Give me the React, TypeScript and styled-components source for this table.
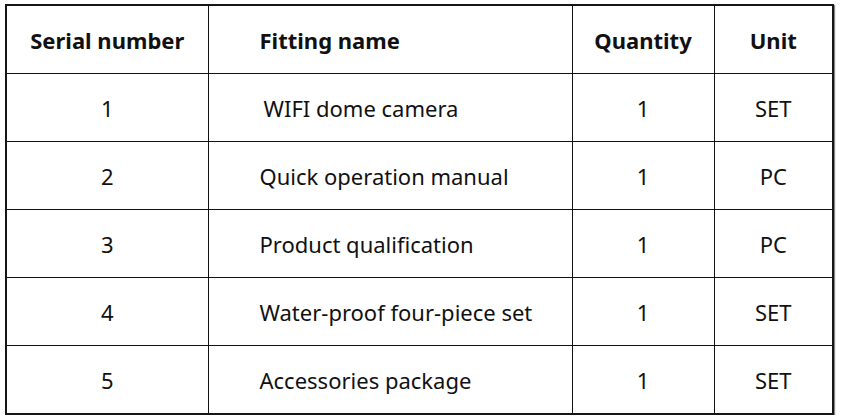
import * as React from "react";
import styled, { createGlobalStyle } from "styled-components";

const GlobalStyle = createGlobalStyle`
  html, body {
    margin: 0;
    padding: 0;
    background: #ffffff;
  }
  body {
    font-family: "Noto Sans", "Open Sans", sans-serif;
    color: #111111;
  }
`;

type Row = {
  serial: string;
  name: string;
  quantity: string;
  unit: string;
  indent?: boolean;
};

const rows: Row[] = [
  { serial: "1", name: "WIFI dome camera", quantity: "1", unit: "SET", indent: true },
  { serial: "2", name: "Quick operation manual", quantity: "1", unit: "PC" },
  { serial: "3", name: "Product qualification", quantity: "1", unit: "PC" },
  { serial: "4", name: "Water-proof four-piece set", quantity: "1", unit: "SET" },
  { serial: "5", name: "Accessories package", quantity: "1", unit: "SET" },
];

// markup
const App = () => {
  return (
    <Page>
      <GlobalStyle />
      <Table>
        <colgroup>
          <col style={{ width: 202 }} />
          <col style={{ width: 364 }} />
          <col style={{ width: 142 }} />
          <col style={{ width: 119 }} />
        </colgroup>
        <thead>
          <tr>
            <HeadCell>Serial number</HeadCell>
            <HeadCell $left>Fitting name</HeadCell>
            <HeadCell>Quantity</HeadCell>
            <HeadCell>Unit</HeadCell>
          </tr>
        </thead>
        <tbody>
          {rows.map((row) => (
            <tr key={row.serial}>
              <Cell>{row.serial}</Cell>
              <Cell $left $indent={row.indent}>
                {row.name}
              </Cell>
              <Cell>{row.quantity}</Cell>
              <Cell>{row.unit}</Cell>
            </tr>
          ))}
        </tbody>
      </Table>
    </Page>
  );
};

const Page = styled.div`
  padding: 4px 0 0 5px;
`;

const Table = styled.table`
  border-collapse: collapse;
  table-layout: fixed;
  width: 829px;
  border: 2px solid #161616;
  box-shadow: 1px 1px 1px #8a8a8a;
`;

const HeadCell = styled.th<{ $left?: boolean }>`
  height: 67px;
  padding: 0 0 0 ${(p) => (p.$left ? "51px" : "0")};
  border: 1px solid #111111;
  text-align: ${(p) => (p.$left ? "left" : "center")};
  font-size: 22px;
  font-weight: 700;
  vertical-align: middle;
`;

const Cell = styled.td<{ $left?: boolean; $indent?: boolean }>`
  height: 67px;
  padding: 0 0 0 ${(p) => (p.$left ? (p.$indent ? "55px" : "51px") : "0")};
  border: 1px solid #111111;
  text-align: ${(p) => (p.$left ? "left" : "center")};
  font-size: 22px;
  font-weight: 400;
  vertical-align: middle;
  white-space: nowrap;
`;

export default App;
